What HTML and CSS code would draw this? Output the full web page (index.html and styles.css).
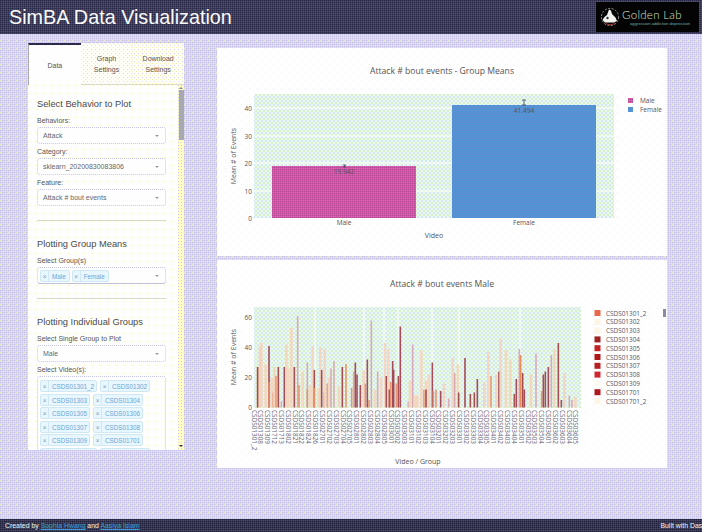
FILE: index.html
```html
<!DOCTYPE html>
<html lang="en">
<head>
<meta charset="utf-8">
<title>SimBA Data Visualization</title>
<link rel="stylesheet" href="styles.css">
</head>
<body>
<header class="topbar">
  <h1 class="app-title">SimBA Data Visualization</h1>
  <div class="logo">
    <svg class="logo-mark" width="20" height="20" viewBox="0 0 20 20">
      <circle cx="10" cy="10" r="8.6" fill="none" stroke="#b9b9b9" stroke-width=".8" stroke-dasharray="2 1.5"/>
      <path d="M9 2.500l2 1 1 3.500 3.500 3.500 1.500 3.500-3 1.500H5L2.500 13l2-3 2.500-2z" fill="#f1f1ee"/>
      <path d="M6 16.500c2 1.500 6 1.500 8.500 0" fill="none" stroke="#a83030" stroke-width="1"/>
      <circle cx="7.500" cy="11" r="1.200" fill="#333"/>
    </svg>
    <div class="logo-text">
      <div class="logo-name">Golden Lab</div>
      <div class="logo-sub">aggression addiction depression</div>
    </div>
  </div>
</header>

<main class="workspace">
  <aside class="sidebar">
    <nav class="tabs">
      <div class="tab tab-active">Data</div>
      <div class="tab">Graph<br>Settings</div>
      <div class="tab">Download<br>Settings</div>
    </nav>
    <div class="panel">
      <div class="panel-body">
        <h2 class="section-title">Select Behavior to Plot</h2>
        <label class="field-label">Behaviors:</label>
        <div class="select"><span>Attack</span><i class="caret"></i></div>
        <label class="field-label field-next">Category:</label>
        <div class="select"><span>sklearn_20200830083806</span><i class="caret"></i></div>
        <label class="field-label field-next">Feature:</label>
        <div class="select"><span>Attack # bout events</span><i class="caret"></i></div>
        <hr class="divider">

        <h2 class="section-title">Plotting Group Means</h2>
        <label class="field-label">Select Group(s)</label>
        <div class="select select-multi">
          <div class="tag"><b>×</b><span>Male</span></div>
          <div class="tag"><b>×</b><span>Female</span></div>
          <i class="caret"></i>
        </div>
        <hr class="divider">

        <h2 class="section-title">Plotting Individual Groups</h2>
        <label class="field-label">Select Single Group to Plot</label>
        <div class="select"><span>Male</span><i class="caret"></i></div>
        <label class="field-label field-next">Select Video(s):</label>
        <div class="tagbox">
          <div class="tag"><b>×</b><span>CSDS01301_2</span></div>
          <div class="tag"><b>×</b><span>CSDS01302</span></div>
          <div class="tag"><b>×</b><span>CSDS01303</span></div>
          <div class="tag"><b>×</b><span>CSDS01304</span></div>
          <div class="tag"><b>×</b><span>CSDS01305</span></div>
          <div class="tag"><b>×</b><span>CSDS01306</span></div>
          <div class="tag"><b>×</b><span>CSDS01307</span></div>
          <div class="tag"><b>×</b><span>CSDS01308</span></div>
          <div class="tag"><b>×</b><span>CSDS01309</span></div>
          <div class="tag"><b>×</b><span>CSDS01701</span></div>
          <div class="tag"><b>×</b><span>CSDS01701_2</span></div>
          <div class="tag"><b>×</b><span>CSDS01702</span></div>
        </div>
      </div>
      <div class="scrollbar">
        <i class="arrow arrow-up"></i>
        <i class="thumb"></i>
        <i class="arrow arrow-down"></i>
      </div>
    </div>
  </aside>

  <section class="charts">
    <article class="card">
      <svg class="chart" width="450" height="208" viewBox="0 0 450 208">
        <defs>
          <pattern id="plotbg" width="4" height="4" patternUnits="userSpaceOnUse">
            <rect width="4" height="4" fill="#eef8f0"/>
            <rect width="2" height="2" fill="#cfe8f6"/>
            <rect x="2" y="2" width="2" height="2" fill="#d4f2c8"/>
          </pattern>
          <pattern id="pink" width="2" height="2" patternUnits="userSpaceOnUse">
            <rect width="2" height="2" fill="#cf50a4"/>
            <rect width="1" height="1" fill="#de68a8"/>
            <rect x="1" y="1" width="1" height="1" fill="#b85098"/>
          </pattern>
          <pattern id="blue" width="2" height="2" patternUnits="userSpaceOnUse">
            <rect width="2" height="2" fill="#5a8ed0"/>
            <rect width="1" height="1" fill="#6c8cb8"/>
            <rect x="1" y="1" width="1" height="1" fill="#5296d8"/>
          </pattern>
        </defs>
        <text class="chart-title" x="225" y="26" text-anchor="middle">Attack # bout events - Group Means</text>
        <rect x="37" y="46" width="360" height="124" fill="url(#plotbg)"/>
        <line class="grid" x1="37" x2="397" y1="60" y2="60"/>
        <line class="grid" x1="37" x2="397" y1="88" y2="88"/>
        <line class="grid" x1="37" x2="397" y1="115" y2="115"/>
        <line class="grid" x1="37" x2="397" y1="143" y2="143"/>
        <rect x="55" y="118" width="144" height="52" fill="url(#pink)"/>
        <rect x="235" y="57" width="144" height="113" fill="url(#blue)"/>
        <path class="err" d="M126 117h3M127.500 117v2M126 119h3"/>
        <path class="err" d="M305 52h4M307 52v5M305 57h4"/>
        <text class="tick" x="127" y="126" text-anchor="middle">19.942</text>
        <text class="tick" x="307" y="65" text-anchor="middle">41.494</text>
        <text class="tick" x="35" y="172.500" text-anchor="end">0</text>
        <text class="tick" x="35" y="145.500" text-anchor="end">10</text>
        <text class="tick" x="35" y="117.500" text-anchor="end">20</text>
        <text class="tick" x="35" y="90.500" text-anchor="end">30</text>
        <text class="tick" x="35" y="62.500" text-anchor="end">40</text>
        <text class="tick" x="127" y="177" text-anchor="middle">Male</text>
        <text class="tick" x="307" y="177" text-anchor="middle">Female</text>
        <text class="axis-title" x="217" y="190" text-anchor="middle">Video</text>
        <text class="axis-title" transform="translate(19 108) rotate(-90)" text-anchor="middle">Mean # of Events</text>
        <rect x="411" y="50" width="5" height="5" fill="url(#pink)"/>
        <rect x="411" y="59" width="5" height="5" fill="url(#blue)"/>
        <text class="tick" x="423" y="55">Male</text>
        <text class="tick" x="423" y="64">Female</text>
      </svg>
    </article>
    <article class="card">
      <svg class="chart" id="video-chart" width="450" height="208" viewBox="0 0 450 208">
        <text class="chart-title" x="225" y="27" text-anchor="middle">Attack # bout events Male</text>
        <rect x="37" y="47" width="327" height="101" fill="url(#plotbg)"/>
        <g id="video-grid"></g>
        <g id="video-bars"></g>
        <text class="tick" x="35" y="150" text-anchor="end">0</text>
        <text class="tick" x="35" y="120" text-anchor="end">20</text>
        <text class="tick" x="35" y="90" text-anchor="end">40</text>
        <text class="tick" x="35" y="60" text-anchor="end">60</text>
        <g id="video-labels"></g>
        <text class="axis-title" x="201" y="204" text-anchor="middle">Video / Group</text>
        <text class="axis-title" transform="translate(19 97) rotate(-90)" text-anchor="middle">Mean # of Events</text>
        <g id="video-legend"></g>
        <rect x="446" y="49" width="3" height="8" fill="#8c8ca0"/>
      </svg>
    </article>
  </section>
</main>

<footer class="footer">
  <span>Created by <a href="#">Sophia Hwang</a> and <a href="#">Aasiya Islam</a></span>
  <span>Built with Dash</span>
</footer>
<script src="chart.js"></script>
</body>
</html>
```
FILE: styles.css
```css
* { box-sizing: border-box; }
html, body { height: 100%; margin: 0; }
body {
  display: flex;
  flex-direction: column;
  overflow: hidden;
  font-family: "Liberation Sans", Arial, sans-serif;
  color: #444;
  background-color: #d6d4f2;
  background-image:
    radial-gradient(circle at .5px .5px, #f4f0b8 .7px, transparent .8px),
    radial-gradient(circle at .5px .5px, #c8c4ea .7px, transparent .8px),
    radial-gradient(circle at .5px .5px, #e8e8fa .7px, transparent .8px);
  background-size: 8px 8px, 2px 2px, 2px 2px;
  background-position: 0 0, 0 0, 1px 1px;
}

.topbar {
  flex: 0 0 34px;
  display: flex;
  justify-content: space-between;
  align-items: center;
  padding: 0 3px 0 9px;
  background-color: #3d3a58;
  background-image:
    radial-gradient(circle at .5px .5px, #2a2a4a .7px, transparent .8px),
    radial-gradient(circle at .5px .5px, #565468 .7px, transparent .8px);
  background-size: 2px 2px;
  background-position: 0 0, 1px 1px;
}
.app-title {
  margin: 0;
  font-size: 19.800px;
  font-weight: 400;
  line-height: 30px;
  color: #fafafa;
}
.logo {
  width: 103px;
  height: 30px;
  display: flex;
  align-items: center;
  gap: 2px;
  padding-left: 4px;
  background: #040404;
}
.logo-name {
  font-family: Lato, sans-serif;
  font-size: 11.500px;
  font-weight: 300;
  line-height: 12px;
  letter-spacing: .3px;
  color: #d6e0c2;
}
.logo-sub {
  margin-left: 8px;
  font-size: 4.200px;
  line-height: 5px;
  white-space: nowrap;
  color: #6fb0a8;
}

.workspace {
  flex: 1;
  min-height: 0;
  display: flex;
  align-items: flex-start;
  padding-left: 28px;
}

.sidebar {
  width: 156px;
  height: 407px;
  margin-top: 9px;
  display: flex;
  flex-direction: column;
  background-color: #fdfdfe;
}
.tabs {
  flex: 0 0 42px;
  display: flex;
}
.tab {
  flex: 1;
  display: flex;
  align-items: center;
  justify-content: center;
  text-align: center;
  font-size: 7px;
  line-height: 11px;
  color: #555;
  border-bottom: 1px solid #dcdccc;
  background-color: #fefef6;
  background-image:
    radial-gradient(circle at .5px .5px, #f6f2a8 .7px, transparent .8px),
    radial-gradient(circle at .5px .5px, #dcdaf0 .7px, transparent .8px);
  background-size: 4px 4px;
  background-position: 0 0, 2px 2px;
}
.tab-active {
  border-top: 2px solid #2d2a4a;
  border-left: 1px solid #aaa;
  border-bottom: 0;
  background-color: #fefeff;
  background-image: radial-gradient(circle at .5px .5px, #fbf6a0 .7px, transparent .8px);
  background-size: 8px 8px;
}

.panel {
  flex: 1;
  min-height: 0;
  display: flex;
  overflow: hidden;
  background-color: #fefeff;
  background-image: radial-gradient(circle at .5px .5px, #fbf6a0 .7px, transparent .8px);
  background-size: 8px 8px;
}
.panel-body {
  flex: 1;
  min-width: 0;
  padding: 12px 12px 0 9px;
}
.section-title {
  margin: 0 0 5px;
  font-size: 9.300px;
  font-weight: 400;
  line-height: 14px;
  color: #4a4a4a;
}
.field-label {
  display: block;
  height: 10px;
  margin-bottom: 1px;
  font-size: 7px;
  line-height: 10px;
  color: #555;
}
.field-next { margin-top: 3px; }
.select {
  height: 17px;
  display: flex;
  align-items: center;
  gap: 2px;
  padding: 0 4px;
  font-size: 7px;
  color: #666;
  border: 1px dotted #c6c6e4;
  border-radius: 3px;
  background: #fefeff;
}
.select > span { padding-left: 1px; }
.caret {
  margin-left: auto;
  margin-right: 2px;
  border: 2px solid transparent;
  border-top: 2.500px solid #999;
  border-bottom: 0;
}
.select-multi {
  padding-left: 2px;
  border-bottom: 1px solid #c0c0d8;
}
.divider {
  height: 0;
  margin: 14px 0 16px;
  border: 0;
  border-top: 1px solid #d8d8c8;
}
.tagbox {
  display: flex;
  flex-wrap: wrap;
  align-content: flex-start;
  gap: 1.500px 3px;
  padding: 3px 2px;
  height: 90px;
  border: 1px dotted #c6c6e4;
  border-radius: 3px;
}
.tag {
  height: 12px;
  display: flex;
  font-size: 6.300px;
  line-height: 11px;
  color: #6aa8d8;
  border: 1px solid #cfe8f4;
  border-radius: 2px;
  background: #e8f6fd;
}
.tag b {
  width: 8px;
  text-align: center;
  font-weight: 400;
  color: #7a9cc0;
  border-right: 1px solid #cfe8f4;
}
.tag span { padding: 0 2px 0 3px; }
.select-multi .tag span { padding: 0 3px; }

.scrollbar {
  flex: 0 0 6px;
  display: flex;
  flex-direction: column;
  align-items: center;
  background-color: #fdfbc8;
  background-image: radial-gradient(circle at .5px .5px, #cfcdea .7px, transparent .8px);
  background-size: 3px 3px;
}
.thumb {
  width: 5px;
  height: 50px;
  margin-top: 1px;
  background: #a8a8b0;
}
.arrow {
  height: 0;
  border: 2px solid transparent;
  margin-top: 2px;
}
.arrow-up { border-bottom: 2px solid #888; border-top: 0; }
.arrow-down {
  margin-top: auto;
  margin-bottom: 3px;
  border-top: 2px solid #333;
  border-bottom: 0;
}

.charts {
  width: 450px;
  margin: 14px 0 0 33px;
  display: flex;
  flex-direction: column;
  gap: 4px;
}
.card {
  height: 208px;
  background-color: #fefeff;
  background-image:
    radial-gradient(circle at .5px .5px, #fdf8a8 .7px, transparent .8px),
    radial-gradient(circle at .5px .5px, #fdf8a8 .7px, transparent .8px);
  background-size: 16px 8px;
  background-position: 0 0, 8px 0;
}
.chart { display: block; font-family: "Open Sans", sans-serif; }
.chart-title { font-size: 8.600px; fill: #555; }
.axis-title { font-size: 7px; fill: #555; }
.tick { font-size: 6.500px; fill: #555; }
.xlabel { font-size: 6.400px; fill: #667; }
.legend-text { font-size: 6.400px; fill: #556; }
.grid { stroke: #fff; stroke-width: 1; }
.err { stroke: #445; stroke-width: .8; fill: none; }

.footer {
  flex: 0 0 13px;
  width: calc(100% + 4px);
  display: flex;
  justify-content: space-between;
  align-items: center;
  padding: 0 0 0 5px;
  font-size: 6.900px;
  color: #f4f4f4;
  white-space: nowrap;
  background-color: #33334f;
  background-image:
    radial-gradient(circle at .5px .5px, #22223c .7px, transparent .8px),
    radial-gradient(circle at .5px .5px, #4c4c62 .7px, transparent .8px);
  background-size: 2px 2px;
  background-position: 0 0, 1px 1px;
}
.footer a { color: #3d9ddb; }
```
FILE: chart.js
```js
// Per-video bars of the lower chart: [source x, mean events, shade].
var D = '#a2434e', S = '#e8906c', L = '#f6d2ba', M = '#d8a6b2', O = '#e88a50';
var baseY = 147.5, unit = 1.5;

var firstRun = [[113,27,S],[113,27,D],[120,41,L],[124,43,L],[137,29,L],[147,41,D],[147,17,S],[155,20,L],[160,10,S],[163,27,L],[168,21,S],[175,27,D],[184,4,M],[193,27,D],[199,42,L],[205,26,L],[214,53,L],[223,27,D],[233,61,M],[237,15,S],[248,24,L],[262,30,M],[262,12,S],[270,15,L],[278,41,L],[283,25,D],[283,13,S],[296,13,L],[301,40,L],[305,25,D],[312,10,S],[314,39,L],[322,16,S],[327,20,L],[333,26,M],[342,31,M],[357,14,L],[367,27,D],[378,29,S],[395,13,S],[401,24,M],[406,30,D],[411,22,D],[421,15,D],[431,25,L],[436,16,S],[442,32,D],[447,5,S],[454,58,M],[465,12,L],[473,24,M],[483,20,L],[495,43,L],[499,21,D],[505,39,L],[508,12,D],[512,17,S],[518,31,D],[521,25,D],[529,16,S],[535,21,D],[541,54,D],[565,4,M],[570,18,L],[578,42,M],[585,8,L],[592,8,L],[604,38,L],[612,12,S],[618,18,L],[618,12,D],[627,22,L],[637,30,D],[640,11,S],[648,12,S],[662,11,D],[672,16,L],[686,6,M],[698,33,L],[704,23,M],[714,29,L],[716,10,D]];
var secondRun = [[342,33,D],[358,9,D],[370,10,D],[379,19,D],[400,17,L],[412,37,L],[420,21,S],[436,22,L],[444,24,D],[449,46,L],[465,38,L],[478,32,L],[490,9,D],[496,19,D],[505,39,M],[509,35,O],[515,23,D],[520,12,D],[540,22,L],[555,36,M],[572,11,S],[577,22,D],[583,24,D],[592,27,D],[601,35,M],[610,39,L],[622,43,D],[631,5,D],[640,23,L],[655,8,M],[663,5,M],[673,7,L]];

var names = ['CSDS01301_2','CSDS01308','CSDS01309','CSDS01712','CSDS01713','CSDS01802','CSDS01821','CSDS01822','CSDS01824','CSDS01826','CSDS02701','CSDS02702','CSDS02703','CSDS02704','CSDS02705','CSDS02801','CSDS02802','CSDS02803','CSDS02804','CSDS02805','CSDS03001','CSDS03002','CSDS03003','CSDS03101','CSDS03102','CSDS03103','CSDS03104','CSDS03201','CSDS03202','CSDS03203','CSDS03301','CSDS03302','CSDS03303','CSDS03304','CSDS03305','CSDS03401','CSDS03402','CSDS03403','CSDS03404','CSDS03501','CSDS03502','CSDS03503','CSDS03504','CSDS03601','CSDS03602','CSDS03603','CSDS03604','CSDS03605'];

var legend = [['CSDS01301_2','#e8684a'],['CSDS01302','#fdf6e4'],['CSDS01303','#fdf6e4'],['CSDS01304','#a02222'],['CSDS01305','#c22222'],['CSDS01306','#b01818'],['CSDS01307','#b82020'],['CSDS01308','#d02830'],['CSDS01309','#fefaf0'],['CSDS01701','#b01820'],['CSDS01701_2','#fdf6e4']];

var gridLines = [98, 147, 167, 181, 215, 242, 303];

var NS = 'http://www.w3.org/2000/svg';
function add(parentId, tag, attrs, text) {
  var el = document.createElementNS(NS, tag);
  for (var k in attrs) el.setAttribute(k, attrs[k]);
  if (text) el.textContent = text;
  document.getElementById(parentId).appendChild(el);
}

gridLines.forEach(function (x) {
  add('video-grid', 'line', { 'class': 'grid', x1: x, x2: x, y1: 47, y2: 148 });
});
function drawBars(run, originX) {
  run.forEach(function (b) {
    var h = b[1] * unit;
    var w = b[2] === L ? 2.6 : 1.6;
    add('video-bars', 'rect', {
      x: originX + b[0] / 3 - 217 - w / 2,
      y: baseY - h,
      width: w,
      height: h,
      fill: b[2],
      'fill-opacity': b[2] === L ? 0.85 : 0.95
    });
  });
}
drawBars(firstRun, 220);
drawBars(secondRun, 351);

names.forEach(function (n, i) {
  var x = 34.5 + i * 6.85;
  add('video-labels', 'text', { 'class': 'xlabel', transform: 'translate(' + x + ' 150) rotate(90)' }, n);
});
legend.forEach(function (l, i) {
  var y = 53 + i * 8.8;
  add('video-legend', 'rect', { x: 377.5, y: y - 3, width: 6, height: 6, fill: l[1] });
  add('video-legend', 'text', { 'class': 'legend-text', x: 389, y: y + 2.5 }, l[0]);
});
```
